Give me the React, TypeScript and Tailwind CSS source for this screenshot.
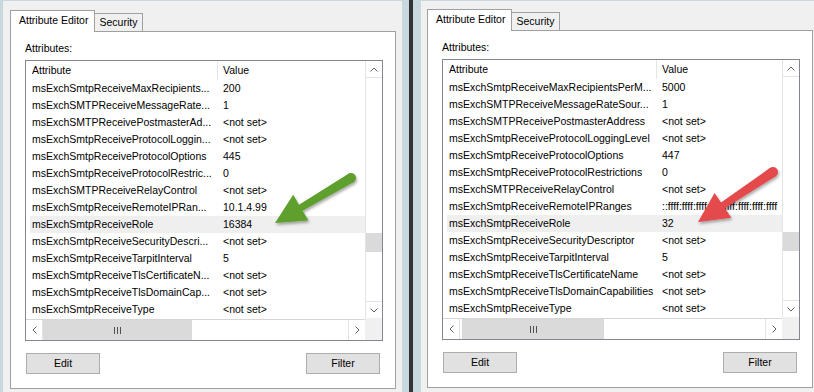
import React from 'react';

type Row = [string, string];

const leftRows: Row[] = [
  ["msExchSmtpReceiveMaxRecipients...", "200"],
  ["msExchSMTPReceiveMessageRate...", "1"],
  ["msExchSMTPReceivePostmasterAd...", "<not set>"],
  ["msExchSmtpReceiveProtocolLoggin...", "<not set>"],
  ["msExchSmtpReceiveProtocolOptions", "445"],
  ["msExchSmtpReceiveProtocolRestric...", "0"],
  ["msExchSMTPReceiveRelayControl", "<not set>"],
  ["msExchSmtpReceiveRemoteIPRan...", "10.1.4.99"],
  ["msExchSmtpReceiveRole", "16384"],
  ["msExchSmtpReceiveSecurityDescri...", "<not set>"],
  ["msExchSmtpReceiveTarpitInterval", "5"],
  ["msExchSmtpReceiveTlsCertificateN...", "<not set>"],
  ["msExchSmtpReceiveTlsDomainCap...", "<not set>"],
  ["msExchSmtpReceiveType", "<not set>"],
];

const rightRows: Row[] = [
  ["msExchSmtpReceiveMaxRecipientsPerM...", "5000"],
  ["msExchSMTPReceiveMessageRateSour...", "1"],
  ["msExchSMTPReceivePostmasterAddress", "<not set>"],
  ["msExchSmtpReceiveProtocolLoggingLevel", "<not set>"],
  ["msExchSmtpReceiveProtocolOptions", "447"],
  ["msExchSmtpReceiveProtocolRestrictions", "0"],
  ["msExchSMTPReceiveRelayControl", "<not set>"],
  ["msExchSmtpReceiveRemoteIPRanges", "::ffff:ffff:ffff:ffff:ffff:ffff:ffff:ffff"],
  ["msExchSmtpReceiveRole", "32"],
  ["msExchSmtpReceiveSecurityDescriptor", "<not set>"],
  ["msExchSmtpReceiveTarpitInterval", "5"],
  ["msExchSmtpReceiveTlsCertificateName", "<not set>"],
  ["msExchSmtpReceiveTlsDomainCapabilities", "<not set>"],
  ["msExchSmtpReceiveType", "<not set>"],
];

function Chevron({ dir }: { dir: 'up' | 'down' | 'left' | 'right' }) {
  const vertical = dir === 'up' || dir === 'down';
  const d = {
    up: "M0.5 4.5 L4 1 L7.5 4.5",
    down: "M0.5 0.5 L4 4 L7.5 0.5",
    left: "M4.5 0.5 L1 4 L4.5 7.5",
    right: "M0.5 0.5 L4 4 L0.5 7.5",
  }[dir];
  return (
    <svg width={vertical ? 8 : 5} height={vertical ? 5 : 8} fill="none" stroke="#606060" strokeWidth="1">
      <path d={d} />
    </svg>
  );
}

function Grip() {
  return (
    <svg width="7" height="7" fill="#505050">
      <rect x="0" y="0" width="1" height="7" />
      <rect x="3" y="0" width="1" height="7" />
      <rect x="6" y="0" width="1" height="7" />
    </svg>
  );
}

type ListProps = {
  rows: Row[];
  nameCol: string;
  rowName: string;
  thumb: string;
};

function ListView({ rows, nameCol, rowName, thumb }: ListProps) {
  return (
    <div className="flex h-[281px] w-[358px] flex-col border border-[#828790] bg-white">
      <div className="flex h-[257px]">
        <div className="flex-1 overflow-hidden">
          {/* header */}
          <div className="flex h-[19px] whitespace-nowrap">
            <div className={`${nameCol} flex items-center border-r border-[#e5e5e5] pl-[6px]`}>Attribute</div>
            <div className="flex items-center pl-[5px]">Value</div>
          </div>
          {rows.map(([name, value], i) => (
            <div
              key={name}
              className={`ml-[4px] flex h-[17px] items-center whitespace-nowrap ${i === 8 ? 'bg-[#efefef]' : ''}`}
            >
              <div className={`${rowName} overflow-hidden pl-[2px]`}>{name}</div>
              <div className="pl-[5px]">{value}</div>
            </div>
          ))}
        </div>
        {/* vertical scrollbar */}
        <div className="flex w-[17px] flex-col border-l border-[#e3e3e3]">
          <div className="flex h-[17px] items-center justify-center border-b border-[#e3e3e3]">
            <Chevron dir="up" />
          </div>
          <div className="flex-1">
            <div className="mt-[155px] h-[19px] bg-[#dadada]" />
          </div>
          <div className="flex h-[17px] items-center justify-center border-t border-[#e3e3e3]">
            <Chevron dir="down" />
          </div>
        </div>
      </div>
      {/* horizontal scrollbar */}
      <div className="flex flex-1 pt-[1px]">
        <div className="flex flex-1 border-t border-[#d6d6d6]">
          <div className="flex w-[17px] items-center justify-center border-r border-[#e3e3e3]">
            <Chevron dir="left" />
          </div>
          <div className={`${thumb} flex items-center justify-center bg-[#dadada]`}>
            <Grip />
          </div>
          <div className="flex-1" />
          <div className="flex w-[17px] items-center justify-center border-l border-[#e3e3e3]">
            <Chevron dir="right" />
          </div>
        </div>
        <div className="-mt-[1px] w-[17px] bg-[#f0f0f0]" />
      </div>
    </div>
  );
}

type WindowProps = ListProps & { pad: string };

function AttributeWindow({ rows, nameCol, rowName, thumb, pad }: WindowProps) {
  return (
    <div className={`mt-[1px] flex flex-col bg-[#f0f0f0] ${pad}`}>
      {/* tabs */}
      <div className="flex h-[21px] items-end">
        <div className="relative z-10 -mb-px flex h-[22px] w-[85px] items-center border-x border-t border-[#a0a0a0] bg-white pb-[2px] pl-[8px]">
          Attribute Editor
        </div>
        <div className="flex h-[18px] w-[48px] items-center justify-center border-r border-t border-[#a0a0a0] bg-[#f0f0f0]">
          Security
        </div>
      </div>
      {/* page */}
      <div className="flex h-[358px] w-[386px] flex-col border border-[#a0a0a0] bg-white px-[14px] pt-[10px]">
        <div className="h-[13px] leading-[13px]">Attributes:</div>
        <div className="mt-[5px]">
          <ListView rows={rows} nameCol={nameCol} rowName={rowName} thumb={thumb} />
        </div>
        <div className="mt-[12px] flex justify-between px-[1px]">
          <button className="h-[21px] w-[74px] border border-[#adadad] bg-[#e1e1e1]">Edit</button>
          <button className="h-[21px] w-[74px] border border-[#adadad] bg-[#e1e1e1]">Filter</button>
        </div>
      </div>
    </div>
  );
}

function arrowPoints(tx: number, ty: number, px: number, py: number) {
  const len = Math.hypot(px - tx, py - ty);
  const ux = (px - tx) / len;
  const uy = (py - ty) / len;
  const nx = uy;
  const ny = -ux;
  const bx = px - 30 * ux;
  const by = py - 30 * uy;
  const p = (x: number, y: number) => `${x.toFixed(1)},${y.toFixed(1)}`;
  return [
    p(tx + 5 * nx, ty + 5 * ny),
    p(bx + 3.5 * nx, by + 3.5 * ny),
    p(bx + 15 * nx, by + 15 * ny),
    p(px, py),
    p(bx - 15 * nx, by - 15 * ny),
    p(bx - 3.5 * nx, by - 3.5 * ny),
    p(tx - 5 * nx, ty - 5 * ny),
  ].join(' ');
}

export default function App() {
  return (
    <div className="relative flex h-[392px] w-[814px] overflow-hidden bg-[#c7d9df] font-['Liberation_Sans',Arial,sans-serif] text-[10.5px] text-black">
      <div className="w-[3px]" />
      <div className="w-[399px]">
        <AttributeWindow
          rows={leftRows}
          nameCol="w-[192px]"
          rowName="w-[188px]"
          thumb="w-[149px]"
          pad="h-[391px] pl-[7px] pt-[9px]"
        />
      </div>
      <div className="w-[7px]" />
      <div className="w-[4px] bg-[#333333]" />
      <div className="w-[8px]" />
      <div className="w-[393px]">
        <AttributeWindow
          rows={rightRows}
          nameCol="w-[214px]"
          rowName="w-[210px]"
          thumb="ml-[2px] w-[142px]"
          pad="h-[391px] pl-[6px] pt-[8px]"
        />
      </div>

      {/* annotation arrows */}
      <svg className="pointer-events-none absolute inset-0" width="814" height="392">
        <defs>
          <filter id="shadow" x="-20%" y="-20%" width="140%" height="140%">
            <feDropShadow dx="1" dy="2" stdDeviation="1.5" floodColor="#000" floodOpacity="0.35" />
          </filter>
        </defs>
        <g filter="url(#shadow)" fill="#5e9f2e">
          <polygon points={arrowPoints(351, 178, 275, 223)} />
          <circle cx="351" cy="178" r="5" />
        </g>
        <g filter="url(#shadow)" fill="#e4494b">
          <polygon points={arrowPoints(773, 172, 698, 222)} />
          <circle cx="773" cy="172" r="5" />
        </g>
      </svg>
    </div>
  );
}
